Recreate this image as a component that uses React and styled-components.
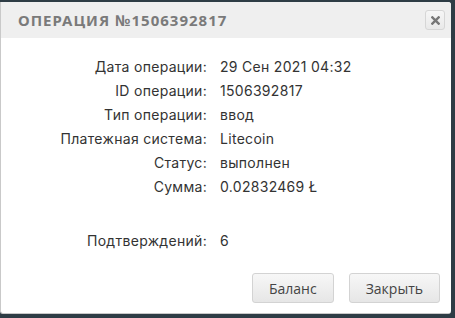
import React from "react";
import styled, { createGlobalStyle } from "styled-components";

const Global = createGlobalStyle`
  html, body {
    margin: 0;
    padding: 0;
    background: #2e3c45;
    width: 455px;
    height: 318px;
    overflow: hidden;
  }
`;

const rows = [
  ["Дата операции:", "29 Сен 2021 04:32"],
  ["ID операции:", "1506392817"],
  ["Тип операции:", "ввод"],
  ["Платежная система:", "Litecoin"],
  ["Статус:", "выполнен"],
  ["Сумма:", "0.02832469 Ł"],
];

const App = () => {
  return (
    <>
      <Global />
      <Dialog>
        <Header>
          <Title>Операция №1506392817</Title>
          <CloseBtn aria-label="close">
            <svg width="9" height="9" viewBox="0 0 10 10">
              <path d="M1.5 1.5L8.5 8.5M8.5 1.5L1.5 8.5" stroke="#777" strokeWidth="2.6" strokeLinecap="square" />
            </svg>
          </CloseBtn>
        </Header>
        <Body>
          <Info>
            {rows.map(([k, v]) => (
              <React.Fragment key={k}>
                <Label>{k}</Label>
                <Value>{v}</Value>
              </React.Fragment>
            ))}
            <Spacer />
            <Label>Подтверждений:</Label>
            <Value>6</Value>
          </Info>
        </Body>
        <Footer>
          <Button>Баланс</Button>
          <Button>Закрыть</Button>
        </Footer>
      </Dialog>
    </>
  );
};

export default App;

const Dialog = styled.div`
  margin-top: 2px;
  width: 450px;
  height: 311px;
  background: #fff;
  border-left: 1px solid #c9c9c9;
  border-bottom: 1px solid #c9c9c9;
  border-radius: 0 3px 3px 3px;
  display: flex;
  flex-direction: column;
  overflow: hidden;
`;

const Header = styled.div`
  height: 36px;
  background: #efefef;
  display: flex;
  align-items: center;
  justify-content: space-between;
  padding: 0 6px 0 17px;
`;

const Title = styled.div`
  font-family: "Noto Sans", sans-serif;
  font-weight: 700;
  font-size: 15px;
  letter-spacing: 1px;
  text-transform: uppercase;
  color: #7a7a7a;
`;

const CloseBtn = styled.button`
  width: 20px;
  height: 20px;
  padding: 0;
  border: 1px solid #d6d6d6;
  border-radius: 3px;
  background: linear-gradient(#f6f6f6, #e9e9e9);
  display: flex;
  align-items: center;
  justify-content: center;
`;

const Body = styled.div`
  flex: 1;
  padding: 17px 0 0;
`;

const Info = styled.div`
  display: grid;
  grid-template-columns: 206px auto;
  column-gap: 13px;
  font-family: "Inter", sans-serif;
  font-size: 14px;
  line-height: 24px;
  letter-spacing: 0.3px;
  color: #333;
`;

const Label = styled.div`
  text-align: right;
  white-space: nowrap;
`;

const Value = styled.div`
  white-space: nowrap;
`;

const Spacer = styled.div`
  grid-column: 1 / 3;
  height: 30px;
`;

const Footer = styled.div`
  display: flex;
  justify-content: flex-end;
  gap: 15px;
  padding: 0 11px 10px 0;
`;

const Button = styled.button`
  height: 30px;
  padding: 0 16px;
  margin: 0;
  font-family: "Open Sans", sans-serif;
  font-size: 14px;
  color: #444;
  border: 1px solid #d3d3d3;
  border-radius: 3px;
  background: linear-gradient(#f7f7f7, #e6e6e6);
`;
